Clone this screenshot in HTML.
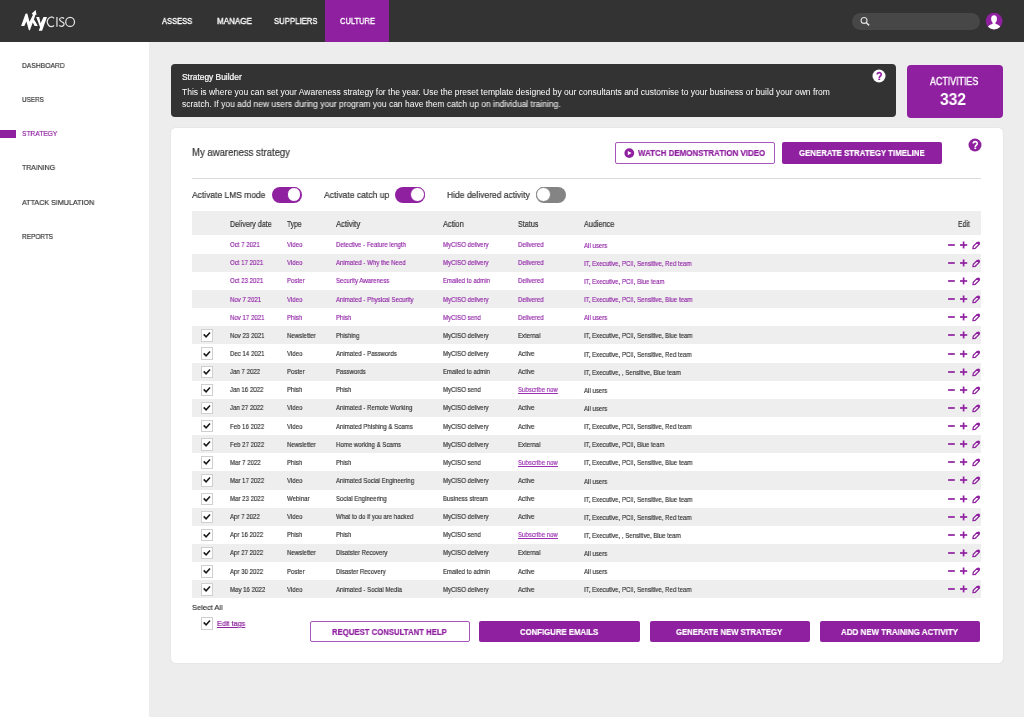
<!DOCTYPE html><html><head><meta charset="utf-8"><style>
html,body{margin:0;padding:0}
body{width:1024px;height:717px;overflow:hidden;position:relative;background:#ededed;font-family:"Liberation Sans",sans-serif}
.t{position:absolute;line-height:1;white-space:nowrap;transform-origin:0 0;will-change:transform}
.b{position:absolute}
</style></head><body>
<div class="b" style="left:0;top:0;width:1024px;height:42px;background:#333333"></div>
<div class="b" style="left:325px;top:0;width:64px;height:42px;background:#8f20a0"></div>
<svg class="b" style="left:0;top:0" width="80" height="42" viewBox="0 0 80 42">
<polygon fill="#fff" points="21.1,25.9 25.5,13.8 27.3,13.6 29.5,21.8 32.9,15 31.8,13.4 35.7,9.9 36.5,15 35.4,14.7 33.9,19.6 35.6,22 37.8,26.1 34.6,26.1 32.8,22.6 29.9,30.3 28.9,30.3 26.4,21.4 24.3,25.9"/>
<polygon fill="#fff" points="36.2,17.1 39.2,17.1 40.6,23.2 43.5,17.1 47,17.1 42.1,30.8 38.7,30.8 40.1,27.2"/>
<g fill="none" stroke="#e4e4e4" stroke-width="1.25">
<path d="M54.1,18.3 A3.95,4.85 0 1 0 54.1,25.4"/>
<line x1="56.95" y1="17.1" x2="56.95" y2="26.7"/>
<path d="M63.9,18.6 C63.2,17.4 59.6,17.2 59.6,19.6 C59.6,22 64.1,21.5 64.1,24.1 C64.1,26.9 60.1,26.9 59.3,25.3"/>
<ellipse cx="70.1" cy="21.9" rx="4.4" ry="4.5"/>
</g></svg>
<div class="t" id="nav_ASSESS" style="left:161.60px;top:16.78px;font-size:9.0px;color:#fff;font-weight:normal;letter-spacing:0px;transform:scaleX(0.8409);-webkit-text-stroke:0.35px #fff;">ASSESS</div>
<div class="t" id="nav_MANAGE" style="left:217.00px;top:16.78px;font-size:9.0px;color:#fff;font-weight:normal;letter-spacing:0px;transform:scaleX(0.8945);-webkit-text-stroke:0.35px #fff;">MANAGE</div>
<div class="t" id="nav_SUPPLIERS" style="left:274.40px;top:16.78px;font-size:9.0px;color:#fff;font-weight:normal;letter-spacing:0px;transform:scaleX(0.8609);-webkit-text-stroke:0.35px #fff;">SUPPLIERS</div>
<div class="t" id="nav_CULTURE" style="left:339.60px;top:16.78px;font-size:9.0px;color:#fff;font-weight:normal;letter-spacing:0px;transform:scaleX(0.8388);-webkit-text-stroke:0.35px #fff;">CULTURE</div>
<div class="b" style="left:851.8px;top:12.8px;width:128.2px;height:17.1px;border-radius:9px;background:#474747"></div>
<svg class="b" style="left:858px;top:14px" width="16" height="16" viewBox="858 14 16 16">
<circle cx="864.05" cy="20.4" r="2.95" fill="none" stroke="#ddd" stroke-width="1.1"/>
<line x1="866.2" y1="22.6" x2="869.2" y2="25.4" stroke="#ddd" stroke-width="1.5"/></svg>
<svg class="b" style="left:984px;top:11px" width="20" height="20" viewBox="984 11 20 20">
<defs><clipPath id="av"><circle cx="994.1" cy="21.1" r="8.4"/></clipPath></defs>
<circle cx="994.1" cy="21.1" r="8.4" fill="#8f20a0"/>
<g clip-path="url(#av)" fill="#fff"><ellipse cx="994.05" cy="18.9" rx="2.9" ry="3.7"/>
<rect x="992.6" y="21" width="2.9" height="4"/>
<path d="M987.2,31 C987.2,26.6 988.8,24.9 992.3,24.1 L995.8,24.1 C999.3,24.9 1000.9,26.6 1000.9,31 Z"/></g></svg>
<div class="b" style="left:0;top:42px;width:149px;height:675px;background:#fff"></div>
<div class="t" id="side0" style="left:21.60px;top:62.04px;font-size:8.1px;color:#333;font-weight:normal;letter-spacing:0px;transform:scaleX(0.8327);-webkit-text-stroke:0.2px #333;">DASHBOARD</div>
<div class="t" id="side1" style="left:21.60px;top:96.19px;font-size:8.1px;color:#333;font-weight:normal;letter-spacing:0px;transform:scaleX(0.7852);-webkit-text-stroke:0.2px #333;">USERS</div>
<div class="t" id="side2" style="left:21.60px;top:130.34px;font-size:8.1px;color:#8f20a0;font-weight:normal;letter-spacing:0px;transform:scaleX(0.8227);-webkit-text-stroke:0.2px #8f20a0;">STRATEGY</div>
<div class="t" id="side3" style="left:21.60px;top:164.49px;font-size:8.1px;color:#333;font-weight:normal;letter-spacing:0px;transform:scaleX(0.8533);-webkit-text-stroke:0.2px #333;">TRAINING</div>
<div class="t" id="side4" style="left:21.60px;top:198.64px;font-size:8.1px;color:#333;font-weight:normal;letter-spacing:0px;transform:scaleX(0.8822);-webkit-text-stroke:0.2px #333;">ATTACK SIMULATION</div>
<div class="t" id="side5" style="left:21.60px;top:232.79px;font-size:8.1px;color:#333;font-weight:normal;letter-spacing:0px;transform:scaleX(0.7978);-webkit-text-stroke:0.2px #333;">REPORTS</div>
<div class="b" style="left:0;top:130px;width:16px;height:7.6px;background:#8f20a0"></div>
<div class="b" style="left:171px;top:64px;width:725px;height:53px;border-radius:4px;background:#333333"></div>
<div class="t" id="sb" style="left:181.60px;top:72.89px;font-size:8.4px;color:#fff;font-weight:normal;letter-spacing:0px;transform:scaleX(1.0018);-webkit-text-stroke:0.2px #fff;">Strategy Builder</div>
<div class="t" id="d1" style="left:181.60px;top:87.60px;font-size:8.5px;color:#fff;font-weight:normal;letter-spacing:0px;transform:scaleX(1.0012);">This is where you can set your Awareness strategy for the year. Use the preset template designed by our consultants and customise to your business or build your own from</div>
<div class="t" id="d2" style="left:181.60px;top:100.00px;font-size:8.5px;color:#fff;font-weight:normal;letter-spacing:0px;transform:scaleX(0.9956);">scratch. If you add new users during your program you can have them catch up on individual training.</div>
<svg class="b" style="left:871.0px;top:67.7px" width="16" height="16" viewBox="871.0 67.7 16 16"><circle cx="879.0" cy="75.7" r="6.5" fill="#fff"/><path d="M877.25,74.2 C877.25,71.75 881.25,71.75 881.25,74.10000000000001 C881.25,75.7 879.25,75.9 879.25,77.60000000000001" fill="none" stroke="#8f20a0" stroke-width="1.6"/><rect x="878.35" y="78.2" width="1.8" height="1.5" fill="#8f20a0"/></svg>
<div class="b" style="left:907px;top:65px;width:95.6px;height:53.2px;border-radius:4px;background:#8f20a0"></div>
<div class="t" id="act" style="left:930.20px;top:77.03px;font-size:10.0px;color:#fff;font-weight:normal;letter-spacing:0px;transform:scaleX(0.8870);-webkit-text-stroke:0.35px #fff;">ACTIVITIES</div>
<div class="t" id="n332" style="left:940.40px;top:90.79px;font-size:16.3px;color:#fff;font-weight:bold;letter-spacing:0px;transform:scaleX(0.9606);">332</div>
<div class="b" style="left:171px;top:128px;width:831.8px;height:535.3px;border-radius:4.5px;background:#fff;box-shadow:0 0 1.5px rgba(0,0,0,0.12)"></div>
<div class="t" id="mas" style="left:192.30px;top:147.14px;font-size:10.7px;color:#333;font-weight:normal;letter-spacing:0px;transform:scaleX(0.8918);-webkit-text-stroke:0.2px #333;">My awareness strategy</div>
<div class="b" style="left:615.2px;top:142.4px;width:160.3px;height:21.8px;box-sizing:border-box;border:1.8px solid #a855bb;border-radius:2px;background:#fff"></div>
<svg class="b" style="left:623px;top:147px" width="13" height="13" viewBox="623 147 13 13">
<circle cx="629.3" cy="153.1" r="4.9" fill="#8f20a0"/><polygon points="627.8,150.9 631.6,153.1 627.8,155.3" fill="#fff"/></svg>
<div class="t" id="wdv" style="left:638.00px;top:148.78px;font-size:9.0px;color:#8f20a0;font-weight:bold;letter-spacing:0px;transform:scaleX(0.8816);-webkit-text-stroke:0.2px #8f20a0;">WATCH DEMONSTRATION VIDEO</div>
<div class="b" style="left:782.2px;top:142.4px;width:159.5px;height:21.3px;border-radius:2px;background:#8f20a0"></div>
<div class="t" id="gst" style="left:798.60px;top:148.88px;font-size:9.0px;color:#fff;font-weight:bold;letter-spacing:0px;transform:scaleX(0.8698);-webkit-text-stroke:0.2px #fff;">GENERATE STRATEGY TIMELINE</div>
<svg class="b" style="left:966.95px;top:137.0px" width="16" height="16" viewBox="966.95 137.0 16 16"><circle cx="974.95" cy="145.0" r="6.5" fill="#8f20a0"/><path d="M973.2,143.5 C973.2,141.05 977.2,141.05 977.2,143.4 C977.2,145.0 975.2,145.2 975.2,146.9" fill="none" stroke="#fff" stroke-width="1.6"/><rect x="974.3000000000001" y="147.5" width="1.8" height="1.5" fill="#fff"/></svg>
<div class="b" style="left:192px;top:178px;width:789px;height:1px;background:#dcdcdc"></div>
<div class="t" id="alm" style="left:192.30px;top:189.64px;font-size:9.4px;color:#333;font-weight:normal;letter-spacing:0px;transform:scaleX(0.9029);-webkit-text-stroke:0.2px #333;">Activate LMS mode</div>
<div class="b" style="left:271.9px;top:186.6px;width:29.8px;height:16.1px;border-radius:8.05px;background:#8f20a0"></div><div class="b" style="left:286.79999999999995px;top:187.3px;width:14.7px;height:14.7px;box-sizing:border-box;border-radius:50%;background:#fff;border:0.9px solid #8f20a0"></div>
<div class="t" id="acu" style="left:323.70px;top:189.64px;font-size:9.4px;color:#333;font-weight:normal;letter-spacing:0px;transform:scaleX(0.9131);-webkit-text-stroke:0.2px #333;">Activate catch up</div>
<div class="b" style="left:395.2px;top:186.6px;width:29.8px;height:16.1px;border-radius:8.05px;background:#8f20a0"></div><div class="b" style="left:410.09999999999997px;top:187.3px;width:14.7px;height:14.7px;box-sizing:border-box;border-radius:50%;background:#fff;border:0.9px solid #8f20a0"></div>
<div class="t" id="hda" style="left:446.60px;top:189.64px;font-size:9.4px;color:#333;font-weight:normal;letter-spacing:0px;transform:scaleX(0.9080);-webkit-text-stroke:0.2px #333;">Hide delivered activity</div>
<div class="b" style="left:536px;top:186.6px;width:29.8px;height:16.1px;border-radius:8.05px;background:#848484"></div><div class="b" style="left:536.1px;top:187.3px;width:14.8px;height:14.8px;box-sizing:border-box;border-radius:50%;background:#fff;border:0.9px solid #848484"></div>
<div class="b" style="left:192px;top:211.2px;width:789.3px;height:23.8px;background:#eeeeee"></div>
<div class="t" id="h_Deliverydate" style="left:229.80px;top:219.97px;font-size:8.3px;color:#333;font-weight:normal;letter-spacing:0px;transform:scaleX(0.8612);-webkit-text-stroke:0.2px #333;">Delivery date</div>
<div class="t" id="h_Type" style="left:287.30px;top:219.97px;font-size:8.3px;color:#333;font-weight:normal;letter-spacing:0px;transform:scaleX(0.8111);-webkit-text-stroke:0.2px #333;">Type</div>
<div class="t" id="h_Activity" style="left:335.90px;top:219.97px;font-size:8.3px;color:#333;font-weight:normal;letter-spacing:0px;transform:scaleX(0.9208);-webkit-text-stroke:0.2px #333;">Activity</div>
<div class="t" id="h_Action" style="left:442.80px;top:219.97px;font-size:8.3px;color:#333;font-weight:normal;letter-spacing:0px;transform:scaleX(0.8976);-webkit-text-stroke:0.2px #333;">Action</div>
<div class="t" id="h_Status" style="left:517.50px;top:219.97px;font-size:8.3px;color:#333;font-weight:normal;letter-spacing:0px;transform:scaleX(0.8669);-webkit-text-stroke:0.2px #333;">Status</div>
<div class="t" id="h_Audience" style="left:584.00px;top:219.97px;font-size:8.3px;color:#333;font-weight:normal;letter-spacing:0px;transform:scaleX(0.8755);-webkit-text-stroke:0.2px #333;">Audience</div>
<div class="t" id="h_edit" style="left:957.60px;top:219.77px;font-size:8.3px;color:#333;font-weight:normal;letter-spacing:0px;transform:scaleX(0.8184);-webkit-text-stroke:0.2px #333;">Edit</div>
<div class="t" style="left:229.80px;top:241.18px;font-size:7.3px;color:#9328a8;font-weight:normal;letter-spacing:0px;-webkit-text-stroke:0.18px #9328a8;transform:scaleX(0.8336);">Oct 7 2021</div>
<div class="t" style="left:287.30px;top:241.18px;font-size:7.3px;color:#9328a8;font-weight:normal;letter-spacing:0px;-webkit-text-stroke:0.18px #9328a8;transform:scaleX(0.8336);">Video</div>
<div class="t" style="left:335.90px;top:241.18px;font-size:7.3px;color:#9328a8;font-weight:normal;letter-spacing:0px;-webkit-text-stroke:0.18px #9328a8;transform:scaleX(0.8336);">Detective - Feature length</div>
<div class="t" style="left:442.80px;top:241.18px;font-size:7.3px;color:#9328a8;font-weight:normal;letter-spacing:0px;-webkit-text-stroke:0.18px #9328a8;transform:scaleX(0.8336);">MyCISO delivery</div>
<div class="t" style="left:517.50px;top:241.18px;font-size:7.3px;color:#9328a8;font-weight:normal;letter-spacing:0px;-webkit-text-stroke:0.18px #9328a8;transform:scaleX(0.8336);">Delivered</div>
<div class="t" style="left:584.00px;top:241.78px;font-size:7.3px;color:#9328a8;font-weight:normal;letter-spacing:0px;-webkit-text-stroke:0.18px #9328a8;transform:scaleX(0.8336);">All users</div>
<svg class="b" style="left:946px;top:235.72px" width="36" height="18" viewBox="946 235.72 36 18">
<line x1="948.1" y1="244.72" x2="954.8" y2="244.72" stroke="#8f20a0" stroke-width="1.7"/>
<line x1="960" y1="244.72" x2="967.2" y2="244.72" stroke="#8f20a0" stroke-width="1.7"/>
<line x1="963.6" y1="241.22" x2="963.6" y2="248.12" stroke="#8f20a0" stroke-width="1.7"/>
<path d="M972.9,248.41 L973.3,246.02 L977.2,242.12 L979.2,244.12 L975.3,248.02 Z" fill="none" stroke="#8f20a0" stroke-width="1.25" stroke-linejoin="round"/>
<path d="M976.6,242.72 L977.9,241.41 Q978.6,240.91 979.3,241.52 L979.9,242.12 Q980.4,242.81 979.9,243.41 L978.6,244.72 Z" fill="#8f20a0"/>
</svg>
<div class="b" style="left:192px;top:253.85px;width:789.3px;height:18.05px;background:#eeeeee"></div>
<div class="t" style="left:229.80px;top:259.32px;font-size:7.3px;color:#9328a8;font-weight:normal;letter-spacing:0px;-webkit-text-stroke:0.18px #9328a8;transform:scaleX(0.8336);">Oct 17 2021</div>
<div class="t" style="left:287.30px;top:259.32px;font-size:7.3px;color:#9328a8;font-weight:normal;letter-spacing:0px;-webkit-text-stroke:0.18px #9328a8;transform:scaleX(0.8336);">Video</div>
<div class="t" style="left:335.90px;top:259.32px;font-size:7.3px;color:#9328a8;font-weight:normal;letter-spacing:0px;-webkit-text-stroke:0.18px #9328a8;transform:scaleX(0.8336);">Animated - Why the Need</div>
<div class="t" style="left:442.80px;top:259.32px;font-size:7.3px;color:#9328a8;font-weight:normal;letter-spacing:0px;-webkit-text-stroke:0.18px #9328a8;transform:scaleX(0.8336);">MyCISO delivery</div>
<div class="t" style="left:517.50px;top:259.32px;font-size:7.3px;color:#9328a8;font-weight:normal;letter-spacing:0px;-webkit-text-stroke:0.18px #9328a8;transform:scaleX(0.8336);">Delivered</div>
<div class="t" style="left:584.00px;top:259.92px;font-size:7.3px;color:#9328a8;font-weight:normal;letter-spacing:0px;-webkit-text-stroke:0.18px #9328a8;transform:scaleX(0.8336);">IT, Executive, PCII, Sensitive, Red team</div>
<svg class="b" style="left:946px;top:253.85px" width="36" height="18" viewBox="946 253.85 36 18">
<line x1="948.1" y1="262.85" x2="954.8" y2="262.85" stroke="#8f20a0" stroke-width="1.7"/>
<line x1="960" y1="262.85" x2="967.2" y2="262.85" stroke="#8f20a0" stroke-width="1.7"/>
<line x1="963.6" y1="259.35" x2="963.6" y2="266.25" stroke="#8f20a0" stroke-width="1.7"/>
<path d="M972.9,266.55 L973.3,264.15 L977.2,260.25 L979.2,262.25 L975.3,266.15 Z" fill="none" stroke="#8f20a0" stroke-width="1.25" stroke-linejoin="round"/>
<path d="M976.6,260.85 L977.9,259.55 Q978.6,259.05 979.3,259.65 L979.9,260.25 Q980.4,260.95 979.9,261.55 L978.6,262.85 Z" fill="#8f20a0"/>
</svg>
<div class="t" style="left:229.80px;top:277.45px;font-size:7.3px;color:#9328a8;font-weight:normal;letter-spacing:0px;-webkit-text-stroke:0.18px #9328a8;transform:scaleX(0.8336);">Oct 23 2021</div>
<div class="t" style="left:287.30px;top:277.45px;font-size:7.3px;color:#9328a8;font-weight:normal;letter-spacing:0px;-webkit-text-stroke:0.18px #9328a8;transform:scaleX(0.8336);">Poster</div>
<div class="t" style="left:335.90px;top:277.45px;font-size:7.3px;color:#9328a8;font-weight:normal;letter-spacing:0px;-webkit-text-stroke:0.18px #9328a8;transform:scaleX(0.8336);">Security Awareness</div>
<div class="t" style="left:442.80px;top:277.45px;font-size:7.3px;color:#9328a8;font-weight:normal;letter-spacing:0px;-webkit-text-stroke:0.18px #9328a8;transform:scaleX(0.8336);">Emailed to admin</div>
<div class="t" style="left:517.50px;top:277.45px;font-size:7.3px;color:#9328a8;font-weight:normal;letter-spacing:0px;-webkit-text-stroke:0.18px #9328a8;transform:scaleX(0.8336);">Delivered</div>
<div class="t" style="left:584.00px;top:278.05px;font-size:7.3px;color:#9328a8;font-weight:normal;letter-spacing:0px;-webkit-text-stroke:0.18px #9328a8;transform:scaleX(0.8336);">IT, Executive, PCII, Blue team</div>
<svg class="b" style="left:946px;top:271.99px" width="36" height="18" viewBox="946 271.99 36 18">
<line x1="948.1" y1="280.99" x2="954.8" y2="280.99" stroke="#8f20a0" stroke-width="1.7"/>
<line x1="960" y1="280.99" x2="967.2" y2="280.99" stroke="#8f20a0" stroke-width="1.7"/>
<line x1="963.6" y1="277.49" x2="963.6" y2="284.38" stroke="#8f20a0" stroke-width="1.7"/>
<path d="M972.9,284.69 L973.3,282.29 L977.2,278.38 L979.2,280.38 L975.3,284.29 Z" fill="none" stroke="#8f20a0" stroke-width="1.25" stroke-linejoin="round"/>
<path d="M976.6,278.99 L977.9,277.69 Q978.6,277.19 979.3,277.79 L979.9,278.38 Q980.4,279.09 979.9,279.69 L978.6,280.99 Z" fill="#8f20a0"/>
</svg>
<div class="b" style="left:192px;top:290.12px;width:789.3px;height:18.05px;background:#eeeeee"></div>
<div class="t" style="left:229.80px;top:295.59px;font-size:7.3px;color:#9328a8;font-weight:normal;letter-spacing:0px;-webkit-text-stroke:0.18px #9328a8;transform:scaleX(0.8336);">Nov 7 2021</div>
<div class="t" style="left:287.30px;top:295.59px;font-size:7.3px;color:#9328a8;font-weight:normal;letter-spacing:0px;-webkit-text-stroke:0.18px #9328a8;transform:scaleX(0.8336);">Video</div>
<div class="t" style="left:335.90px;top:295.59px;font-size:7.3px;color:#9328a8;font-weight:normal;letter-spacing:0px;-webkit-text-stroke:0.18px #9328a8;transform:scaleX(0.8336);">Animated - Physical Security</div>
<div class="t" style="left:442.80px;top:295.59px;font-size:7.3px;color:#9328a8;font-weight:normal;letter-spacing:0px;-webkit-text-stroke:0.18px #9328a8;transform:scaleX(0.8336);">MyCISO delivery</div>
<div class="t" style="left:517.50px;top:295.59px;font-size:7.3px;color:#9328a8;font-weight:normal;letter-spacing:0px;-webkit-text-stroke:0.18px #9328a8;transform:scaleX(0.8336);">Delivered</div>
<div class="t" style="left:584.00px;top:296.19px;font-size:7.3px;color:#9328a8;font-weight:normal;letter-spacing:0px;-webkit-text-stroke:0.18px #9328a8;transform:scaleX(0.8336);">IT, Executive, PCII, Sensitive, Blue team</div>
<svg class="b" style="left:946px;top:290.12px" width="36" height="18" viewBox="946 290.12 36 18">
<line x1="948.1" y1="299.12" x2="954.8" y2="299.12" stroke="#8f20a0" stroke-width="1.7"/>
<line x1="960" y1="299.12" x2="967.2" y2="299.12" stroke="#8f20a0" stroke-width="1.7"/>
<line x1="963.6" y1="295.62" x2="963.6" y2="302.52" stroke="#8f20a0" stroke-width="1.7"/>
<path d="M972.9,302.82 L973.3,300.42 L977.2,296.52 L979.2,298.52 L975.3,302.42 Z" fill="none" stroke="#8f20a0" stroke-width="1.25" stroke-linejoin="round"/>
<path d="M976.6,297.12 L977.9,295.82 Q978.6,295.32 979.3,295.92 L979.9,296.52 Q980.4,297.22 979.9,297.82 L978.6,299.12 Z" fill="#8f20a0"/>
</svg>
<div class="t" style="left:229.80px;top:313.72px;font-size:7.3px;color:#9328a8;font-weight:normal;letter-spacing:0px;-webkit-text-stroke:0.18px #9328a8;transform:scaleX(0.8336);">Nov 17 2021</div>
<div class="t" style="left:287.30px;top:313.72px;font-size:7.3px;color:#9328a8;font-weight:normal;letter-spacing:0px;-webkit-text-stroke:0.18px #9328a8;transform:scaleX(0.8336);">Phish</div>
<div class="t" style="left:335.90px;top:313.72px;font-size:7.3px;color:#9328a8;font-weight:normal;letter-spacing:0px;-webkit-text-stroke:0.18px #9328a8;transform:scaleX(0.8336);">Phish</div>
<div class="t" style="left:442.80px;top:313.72px;font-size:7.3px;color:#9328a8;font-weight:normal;letter-spacing:0px;-webkit-text-stroke:0.18px #9328a8;transform:scaleX(0.8336);">MyCISO send</div>
<div class="t" style="left:517.50px;top:313.72px;font-size:7.3px;color:#9328a8;font-weight:normal;letter-spacing:0px;-webkit-text-stroke:0.18px #9328a8;transform:scaleX(0.8336);">Delivered</div>
<div class="t" style="left:584.00px;top:314.32px;font-size:7.3px;color:#9328a8;font-weight:normal;letter-spacing:0px;-webkit-text-stroke:0.18px #9328a8;transform:scaleX(0.8336);">All users</div>
<svg class="b" style="left:946px;top:308.25px" width="36" height="18" viewBox="946 308.25 36 18">
<line x1="948.1" y1="317.25" x2="954.8" y2="317.25" stroke="#8f20a0" stroke-width="1.7"/>
<line x1="960" y1="317.25" x2="967.2" y2="317.25" stroke="#8f20a0" stroke-width="1.7"/>
<line x1="963.6" y1="313.75" x2="963.6" y2="320.65" stroke="#8f20a0" stroke-width="1.7"/>
<path d="M972.9,320.95 L973.3,318.56 L977.2,314.65 L979.2,316.65 L975.3,320.56 Z" fill="none" stroke="#8f20a0" stroke-width="1.25" stroke-linejoin="round"/>
<path d="M976.6,315.25 L977.9,313.95 Q978.6,313.45 979.3,314.06 L979.9,314.65 Q980.4,315.36 979.9,315.95 L978.6,317.25 Z" fill="#8f20a0"/>
</svg>
<div class="b" style="left:192px;top:326.39px;width:789.3px;height:18.05px;background:#eeeeee"></div>
<div class="b" style="left:200.6px;top:329.29px;width:12.5px;height:12.5px;box-sizing:border-box;border:1px solid #cfcfcf;background:#fff"></div>
<svg class="b" style="left:200px;top:328.39px" width="14" height="14" viewBox="0 0 14 14"><polyline points="3.7,6.4 6.1,8.8 10,4.5" fill="none" stroke="#1a1a1a" stroke-width="1.55" stroke-linecap="butt"/></svg>
<div class="t" style="left:229.80px;top:331.86px;font-size:7.3px;color:#333;font-weight:normal;letter-spacing:0px;-webkit-text-stroke:0.18px #333;transform:scaleX(0.8336);">Nov 23 2021</div>
<div class="t" style="left:287.30px;top:331.86px;font-size:7.3px;color:#333;font-weight:normal;letter-spacing:0px;-webkit-text-stroke:0.18px #333;transform:scaleX(0.8336);">Newsletter</div>
<div class="t" style="left:335.90px;top:331.86px;font-size:7.3px;color:#333;font-weight:normal;letter-spacing:0px;-webkit-text-stroke:0.18px #333;transform:scaleX(0.8336);">Phishing</div>
<div class="t" style="left:442.80px;top:331.86px;font-size:7.3px;color:#333;font-weight:normal;letter-spacing:0px;-webkit-text-stroke:0.18px #333;transform:scaleX(0.8336);">MyCISO delivery</div>
<div class="t" style="left:517.50px;top:331.86px;font-size:7.3px;color:#333;font-weight:normal;letter-spacing:0px;-webkit-text-stroke:0.18px #333;transform:scaleX(0.8336);">External</div>
<div class="t" style="left:584.00px;top:332.46px;font-size:7.3px;color:#333;font-weight:normal;letter-spacing:0px;-webkit-text-stroke:0.18px #333;transform:scaleX(0.8336);">IT, Executive, PCII, Sensitive, Blue team</div>
<svg class="b" style="left:946px;top:326.39px" width="36" height="18" viewBox="946 326.39 36 18">
<line x1="948.1" y1="335.39" x2="954.8" y2="335.39" stroke="#8f20a0" stroke-width="1.7"/>
<line x1="960" y1="335.39" x2="967.2" y2="335.39" stroke="#8f20a0" stroke-width="1.7"/>
<line x1="963.6" y1="331.89" x2="963.6" y2="338.79" stroke="#8f20a0" stroke-width="1.7"/>
<path d="M972.9,339.09 L973.3,336.69 L977.2,332.79 L979.2,334.79 L975.3,338.69 Z" fill="none" stroke="#8f20a0" stroke-width="1.25" stroke-linejoin="round"/>
<path d="M976.6,333.39 L977.9,332.09 Q978.6,331.59 979.3,332.19 L979.9,332.79 Q980.4,333.49 979.9,334.09 L978.6,335.39 Z" fill="#8f20a0"/>
</svg>
<div class="b" style="left:200.6px;top:347.42px;width:12.5px;height:12.5px;box-sizing:border-box;border:1px solid #cfcfcf;background:#fff"></div>
<svg class="b" style="left:200px;top:346.52px" width="14" height="14" viewBox="0 0 14 14"><polyline points="3.7,6.4 6.1,8.8 10,4.5" fill="none" stroke="#1a1a1a" stroke-width="1.55" stroke-linecap="butt"/></svg>
<div class="t" style="left:229.80px;top:349.99px;font-size:7.3px;color:#333;font-weight:normal;letter-spacing:0px;-webkit-text-stroke:0.18px #333;transform:scaleX(0.8336);">Dec 14 2021</div>
<div class="t" style="left:287.30px;top:349.99px;font-size:7.3px;color:#333;font-weight:normal;letter-spacing:0px;-webkit-text-stroke:0.18px #333;transform:scaleX(0.8336);">Video</div>
<div class="t" style="left:335.90px;top:349.99px;font-size:7.3px;color:#333;font-weight:normal;letter-spacing:0px;-webkit-text-stroke:0.18px #333;transform:scaleX(0.8336);">Animated - Passwords</div>
<div class="t" style="left:442.80px;top:349.99px;font-size:7.3px;color:#333;font-weight:normal;letter-spacing:0px;-webkit-text-stroke:0.18px #333;transform:scaleX(0.8336);">MyCISO delivery</div>
<div class="t" style="left:517.50px;top:349.99px;font-size:7.3px;color:#333;font-weight:normal;letter-spacing:0px;-webkit-text-stroke:0.18px #333;transform:scaleX(0.8336);">Active</div>
<div class="t" style="left:584.00px;top:350.59px;font-size:7.3px;color:#333;font-weight:normal;letter-spacing:0px;-webkit-text-stroke:0.18px #333;transform:scaleX(0.8336);">IT, Executive, PCII, Sensitive, Red team</div>
<svg class="b" style="left:946px;top:344.52px" width="36" height="18" viewBox="946 344.52 36 18">
<line x1="948.1" y1="353.52" x2="954.8" y2="353.52" stroke="#8f20a0" stroke-width="1.7"/>
<line x1="960" y1="353.52" x2="967.2" y2="353.52" stroke="#8f20a0" stroke-width="1.7"/>
<line x1="963.6" y1="350.02" x2="963.6" y2="356.92" stroke="#8f20a0" stroke-width="1.7"/>
<path d="M972.9,357.22 L973.3,354.82 L977.2,350.92 L979.2,352.92 L975.3,356.82 Z" fill="none" stroke="#8f20a0" stroke-width="1.25" stroke-linejoin="round"/>
<path d="M976.6,351.52 L977.9,350.22 Q978.6,349.72 979.3,350.32 L979.9,350.92 Q980.4,351.62 979.9,352.22 L978.6,353.52 Z" fill="#8f20a0"/>
</svg>
<div class="b" style="left:192px;top:362.66px;width:789.3px;height:18.05px;background:#eeeeee"></div>
<div class="b" style="left:200.6px;top:365.56px;width:12.5px;height:12.5px;box-sizing:border-box;border:1px solid #cfcfcf;background:#fff"></div>
<svg class="b" style="left:200px;top:364.66px" width="14" height="14" viewBox="0 0 14 14"><polyline points="3.7,6.4 6.1,8.8 10,4.5" fill="none" stroke="#1a1a1a" stroke-width="1.55" stroke-linecap="butt"/></svg>
<div class="t" style="left:229.80px;top:368.13px;font-size:7.3px;color:#333;font-weight:normal;letter-spacing:0px;-webkit-text-stroke:0.18px #333;transform:scaleX(0.8336);">Jan 7 2022</div>
<div class="t" style="left:287.30px;top:368.13px;font-size:7.3px;color:#333;font-weight:normal;letter-spacing:0px;-webkit-text-stroke:0.18px #333;transform:scaleX(0.8336);">Poster</div>
<div class="t" style="left:335.90px;top:368.13px;font-size:7.3px;color:#333;font-weight:normal;letter-spacing:0px;-webkit-text-stroke:0.18px #333;transform:scaleX(0.8336);">Passwords</div>
<div class="t" style="left:442.80px;top:368.13px;font-size:7.3px;color:#333;font-weight:normal;letter-spacing:0px;-webkit-text-stroke:0.18px #333;transform:scaleX(0.8336);">Emailed to admin</div>
<div class="t" style="left:517.50px;top:368.13px;font-size:7.3px;color:#333;font-weight:normal;letter-spacing:0px;-webkit-text-stroke:0.18px #333;transform:scaleX(0.8336);">Active</div>
<div class="t" style="left:584.00px;top:368.73px;font-size:7.3px;color:#333;font-weight:normal;letter-spacing:0px;-webkit-text-stroke:0.18px #333;transform:scaleX(0.8336);">IT, Executive, , Sensitive, Blue team</div>
<svg class="b" style="left:946px;top:362.66px" width="36" height="18" viewBox="946 362.66 36 18">
<line x1="948.1" y1="371.66" x2="954.8" y2="371.66" stroke="#8f20a0" stroke-width="1.7"/>
<line x1="960" y1="371.66" x2="967.2" y2="371.66" stroke="#8f20a0" stroke-width="1.7"/>
<line x1="963.6" y1="368.16" x2="963.6" y2="375.06" stroke="#8f20a0" stroke-width="1.7"/>
<path d="M972.9,375.36 L973.3,372.96 L977.2,369.06 L979.2,371.06 L975.3,374.96 Z" fill="none" stroke="#8f20a0" stroke-width="1.25" stroke-linejoin="round"/>
<path d="M976.6,369.66 L977.9,368.36 Q978.6,367.86 979.3,368.46 L979.9,369.06 Q980.4,369.76 979.9,370.36 L978.6,371.66 Z" fill="#8f20a0"/>
</svg>
<div class="b" style="left:200.6px;top:383.69px;width:12.5px;height:12.5px;box-sizing:border-box;border:1px solid #cfcfcf;background:#fff"></div>
<svg class="b" style="left:200px;top:382.80px" width="14" height="14" viewBox="0 0 14 14"><polyline points="3.7,6.4 6.1,8.8 10,4.5" fill="none" stroke="#1a1a1a" stroke-width="1.55" stroke-linecap="butt"/></svg>
<div class="t" style="left:229.80px;top:386.26px;font-size:7.3px;color:#333;font-weight:normal;letter-spacing:0px;-webkit-text-stroke:0.18px #333;transform:scaleX(0.8336);">Jan 16 2022</div>
<div class="t" style="left:287.30px;top:386.26px;font-size:7.3px;color:#333;font-weight:normal;letter-spacing:0px;-webkit-text-stroke:0.18px #333;transform:scaleX(0.8336);">Phish</div>
<div class="t" style="left:335.90px;top:386.26px;font-size:7.3px;color:#333;font-weight:normal;letter-spacing:0px;-webkit-text-stroke:0.18px #333;transform:scaleX(0.8336);">Phish</div>
<div class="t" style="left:442.80px;top:386.26px;font-size:7.3px;color:#333;font-weight:normal;letter-spacing:0px;-webkit-text-stroke:0.18px #333;transform:scaleX(0.8336);">MyCISO send</div>
<div class="t" style="left:517.50px;top:386.26px;font-size:7.3px;color:#9a30b0;font-weight:normal;letter-spacing:0px;text-decoration:underline;text-decoration-thickness:0.6px;text-underline-offset:0.6px;-webkit-text-stroke:0.18px #9a30b0;transform:scaleX(0.8336);">Subscribe now</div>
<div class="t" style="left:584.00px;top:386.86px;font-size:7.3px;color:#333;font-weight:normal;letter-spacing:0px;-webkit-text-stroke:0.18px #333;transform:scaleX(0.8336);">All users</div>
<svg class="b" style="left:946px;top:380.80px" width="36" height="18" viewBox="946 380.80 36 18">
<line x1="948.1" y1="389.80" x2="954.8" y2="389.80" stroke="#8f20a0" stroke-width="1.7"/>
<line x1="960" y1="389.80" x2="967.2" y2="389.80" stroke="#8f20a0" stroke-width="1.7"/>
<line x1="963.6" y1="386.30" x2="963.6" y2="393.19" stroke="#8f20a0" stroke-width="1.7"/>
<path d="M972.9,393.50 L973.3,391.10 L977.2,387.19 L979.2,389.19 L975.3,393.10 Z" fill="none" stroke="#8f20a0" stroke-width="1.25" stroke-linejoin="round"/>
<path d="M976.6,387.80 L977.9,386.50 Q978.6,386.00 979.3,386.60 L979.9,387.19 Q980.4,387.90 979.9,388.50 L978.6,389.80 Z" fill="#8f20a0"/>
</svg>
<div class="b" style="left:192px;top:398.93px;width:789.3px;height:18.05px;background:#eeeeee"></div>
<div class="b" style="left:200.6px;top:401.83px;width:12.5px;height:12.5px;box-sizing:border-box;border:1px solid #cfcfcf;background:#fff"></div>
<svg class="b" style="left:200px;top:400.93px" width="14" height="14" viewBox="0 0 14 14"><polyline points="3.7,6.4 6.1,8.8 10,4.5" fill="none" stroke="#1a1a1a" stroke-width="1.55" stroke-linecap="butt"/></svg>
<div class="t" style="left:229.80px;top:404.40px;font-size:7.3px;color:#333;font-weight:normal;letter-spacing:0px;-webkit-text-stroke:0.18px #333;transform:scaleX(0.8336);">Jan 27 2022</div>
<div class="t" style="left:287.30px;top:404.40px;font-size:7.3px;color:#333;font-weight:normal;letter-spacing:0px;-webkit-text-stroke:0.18px #333;transform:scaleX(0.8336);">Video</div>
<div class="t" style="left:335.90px;top:404.40px;font-size:7.3px;color:#333;font-weight:normal;letter-spacing:0px;-webkit-text-stroke:0.18px #333;transform:scaleX(0.8336);">Animated - Remote Working</div>
<div class="t" style="left:442.80px;top:404.40px;font-size:7.3px;color:#333;font-weight:normal;letter-spacing:0px;-webkit-text-stroke:0.18px #333;transform:scaleX(0.8336);">MyCISO delivery</div>
<div class="t" style="left:517.50px;top:404.40px;font-size:7.3px;color:#333;font-weight:normal;letter-spacing:0px;-webkit-text-stroke:0.18px #333;transform:scaleX(0.8336);">Active</div>
<div class="t" style="left:584.00px;top:405.00px;font-size:7.3px;color:#333;font-weight:normal;letter-spacing:0px;-webkit-text-stroke:0.18px #333;transform:scaleX(0.8336);">All users</div>
<svg class="b" style="left:946px;top:398.93px" width="36" height="18" viewBox="946 398.93 36 18">
<line x1="948.1" y1="407.93" x2="954.8" y2="407.93" stroke="#8f20a0" stroke-width="1.7"/>
<line x1="960" y1="407.93" x2="967.2" y2="407.93" stroke="#8f20a0" stroke-width="1.7"/>
<line x1="963.6" y1="404.43" x2="963.6" y2="411.33" stroke="#8f20a0" stroke-width="1.7"/>
<path d="M972.9,411.63 L973.3,409.23 L977.2,405.33 L979.2,407.33 L975.3,411.23 Z" fill="none" stroke="#8f20a0" stroke-width="1.25" stroke-linejoin="round"/>
<path d="M976.6,405.93 L977.9,404.63 Q978.6,404.13 979.3,404.73 L979.9,405.33 Q980.4,406.03 979.9,406.63 L978.6,407.93 Z" fill="#8f20a0"/>
</svg>
<div class="b" style="left:200.6px;top:419.96px;width:12.5px;height:12.5px;box-sizing:border-box;border:1px solid #cfcfcf;background:#fff"></div>
<svg class="b" style="left:200px;top:419.06px" width="14" height="14" viewBox="0 0 14 14"><polyline points="3.7,6.4 6.1,8.8 10,4.5" fill="none" stroke="#1a1a1a" stroke-width="1.55" stroke-linecap="butt"/></svg>
<div class="t" style="left:229.80px;top:422.53px;font-size:7.3px;color:#333;font-weight:normal;letter-spacing:0px;-webkit-text-stroke:0.18px #333;transform:scaleX(0.8336);">Feb 16 2022</div>
<div class="t" style="left:287.30px;top:422.53px;font-size:7.3px;color:#333;font-weight:normal;letter-spacing:0px;-webkit-text-stroke:0.18px #333;transform:scaleX(0.8336);">Video</div>
<div class="t" style="left:335.90px;top:422.53px;font-size:7.3px;color:#333;font-weight:normal;letter-spacing:0px;-webkit-text-stroke:0.18px #333;transform:scaleX(0.8336);">Animated Phishing &amp; Scams</div>
<div class="t" style="left:442.80px;top:422.53px;font-size:7.3px;color:#333;font-weight:normal;letter-spacing:0px;-webkit-text-stroke:0.18px #333;transform:scaleX(0.8336);">MyCISO delivery</div>
<div class="t" style="left:517.50px;top:422.53px;font-size:7.3px;color:#333;font-weight:normal;letter-spacing:0px;-webkit-text-stroke:0.18px #333;transform:scaleX(0.8336);">Active</div>
<div class="t" style="left:584.00px;top:423.13px;font-size:7.3px;color:#333;font-weight:normal;letter-spacing:0px;-webkit-text-stroke:0.18px #333;transform:scaleX(0.8336);">IT, Executive, PCII, Sensitive, Red team</div>
<svg class="b" style="left:946px;top:417.06px" width="36" height="18" viewBox="946 417.06 36 18">
<line x1="948.1" y1="426.06" x2="954.8" y2="426.06" stroke="#8f20a0" stroke-width="1.7"/>
<line x1="960" y1="426.06" x2="967.2" y2="426.06" stroke="#8f20a0" stroke-width="1.7"/>
<line x1="963.6" y1="422.56" x2="963.6" y2="429.46" stroke="#8f20a0" stroke-width="1.7"/>
<path d="M972.9,429.76 L973.3,427.37 L977.2,423.46 L979.2,425.46 L975.3,429.37 Z" fill="none" stroke="#8f20a0" stroke-width="1.25" stroke-linejoin="round"/>
<path d="M976.6,424.06 L977.9,422.76 Q978.6,422.26 979.3,422.87 L979.9,423.46 Q980.4,424.17 979.9,424.76 L978.6,426.06 Z" fill="#8f20a0"/>
</svg>
<div class="b" style="left:192px;top:435.20px;width:789.3px;height:18.05px;background:#eeeeee"></div>
<div class="b" style="left:200.6px;top:438.10px;width:12.5px;height:12.5px;box-sizing:border-box;border:1px solid #cfcfcf;background:#fff"></div>
<svg class="b" style="left:200px;top:437.20px" width="14" height="14" viewBox="0 0 14 14"><polyline points="3.7,6.4 6.1,8.8 10,4.5" fill="none" stroke="#1a1a1a" stroke-width="1.55" stroke-linecap="butt"/></svg>
<div class="t" style="left:229.80px;top:440.67px;font-size:7.3px;color:#333;font-weight:normal;letter-spacing:0px;-webkit-text-stroke:0.18px #333;transform:scaleX(0.8336);">Feb 27 2022</div>
<div class="t" style="left:287.30px;top:440.67px;font-size:7.3px;color:#333;font-weight:normal;letter-spacing:0px;-webkit-text-stroke:0.18px #333;transform:scaleX(0.8336);">Newsletter</div>
<div class="t" style="left:335.90px;top:440.67px;font-size:7.3px;color:#333;font-weight:normal;letter-spacing:0px;-webkit-text-stroke:0.18px #333;transform:scaleX(0.8336);">Home working &amp; Scams</div>
<div class="t" style="left:442.80px;top:440.67px;font-size:7.3px;color:#333;font-weight:normal;letter-spacing:0px;-webkit-text-stroke:0.18px #333;transform:scaleX(0.8336);">MyCISO delivery</div>
<div class="t" style="left:517.50px;top:440.67px;font-size:7.3px;color:#333;font-weight:normal;letter-spacing:0px;-webkit-text-stroke:0.18px #333;transform:scaleX(0.8336);">External</div>
<div class="t" style="left:584.00px;top:441.27px;font-size:7.3px;color:#333;font-weight:normal;letter-spacing:0px;-webkit-text-stroke:0.18px #333;transform:scaleX(0.8336);">IT, Executive, PCII, Blue team</div>
<svg class="b" style="left:946px;top:435.20px" width="36" height="18" viewBox="946 435.20 36 18">
<line x1="948.1" y1="444.20" x2="954.8" y2="444.20" stroke="#8f20a0" stroke-width="1.7"/>
<line x1="960" y1="444.20" x2="967.2" y2="444.20" stroke="#8f20a0" stroke-width="1.7"/>
<line x1="963.6" y1="440.70" x2="963.6" y2="447.60" stroke="#8f20a0" stroke-width="1.7"/>
<path d="M972.9,447.90 L973.3,445.50 L977.2,441.60 L979.2,443.60 L975.3,447.50 Z" fill="none" stroke="#8f20a0" stroke-width="1.25" stroke-linejoin="round"/>
<path d="M976.6,442.20 L977.9,440.90 Q978.6,440.40 979.3,441.00 L979.9,441.60 Q980.4,442.30 979.9,442.90 L978.6,444.20 Z" fill="#8f20a0"/>
</svg>
<div class="b" style="left:200.6px;top:456.24px;width:12.5px;height:12.5px;box-sizing:border-box;border:1px solid #cfcfcf;background:#fff"></div>
<svg class="b" style="left:200px;top:455.34px" width="14" height="14" viewBox="0 0 14 14"><polyline points="3.7,6.4 6.1,8.8 10,4.5" fill="none" stroke="#1a1a1a" stroke-width="1.55" stroke-linecap="butt"/></svg>
<div class="t" style="left:229.80px;top:458.80px;font-size:7.3px;color:#333;font-weight:normal;letter-spacing:0px;-webkit-text-stroke:0.18px #333;transform:scaleX(0.8336);">Mar 7 2022</div>
<div class="t" style="left:287.30px;top:458.80px;font-size:7.3px;color:#333;font-weight:normal;letter-spacing:0px;-webkit-text-stroke:0.18px #333;transform:scaleX(0.8336);">Phish</div>
<div class="t" style="left:335.90px;top:458.80px;font-size:7.3px;color:#333;font-weight:normal;letter-spacing:0px;-webkit-text-stroke:0.18px #333;transform:scaleX(0.8336);">Phish</div>
<div class="t" style="left:442.80px;top:458.80px;font-size:7.3px;color:#333;font-weight:normal;letter-spacing:0px;-webkit-text-stroke:0.18px #333;transform:scaleX(0.8336);">MyCISO send</div>
<div class="t" style="left:517.50px;top:458.80px;font-size:7.3px;color:#9a30b0;font-weight:normal;letter-spacing:0px;text-decoration:underline;text-decoration-thickness:0.6px;text-underline-offset:0.6px;-webkit-text-stroke:0.18px #9a30b0;transform:scaleX(0.8336);">Subscribe now</div>
<div class="t" style="left:584.00px;top:459.40px;font-size:7.3px;color:#333;font-weight:normal;letter-spacing:0px;-webkit-text-stroke:0.18px #333;transform:scaleX(0.8336);">IT, Executive, PCII, Sensitive, Blue team</div>
<svg class="b" style="left:946px;top:453.34px" width="36" height="18" viewBox="946 453.34 36 18">
<line x1="948.1" y1="462.34" x2="954.8" y2="462.34" stroke="#8f20a0" stroke-width="1.7"/>
<line x1="960" y1="462.34" x2="967.2" y2="462.34" stroke="#8f20a0" stroke-width="1.7"/>
<line x1="963.6" y1="458.84" x2="963.6" y2="465.74" stroke="#8f20a0" stroke-width="1.7"/>
<path d="M972.9,466.04 L973.3,463.64 L977.2,459.74 L979.2,461.74 L975.3,465.64 Z" fill="none" stroke="#8f20a0" stroke-width="1.25" stroke-linejoin="round"/>
<path d="M976.6,460.34 L977.9,459.04 Q978.6,458.54 979.3,459.14 L979.9,459.74 Q980.4,460.44 979.9,461.04 L978.6,462.34 Z" fill="#8f20a0"/>
</svg>
<div class="b" style="left:192px;top:471.47px;width:789.3px;height:18.05px;background:#eeeeee"></div>
<div class="b" style="left:200.6px;top:474.37px;width:12.5px;height:12.5px;box-sizing:border-box;border:1px solid #cfcfcf;background:#fff"></div>
<svg class="b" style="left:200px;top:473.47px" width="14" height="14" viewBox="0 0 14 14"><polyline points="3.7,6.4 6.1,8.8 10,4.5" fill="none" stroke="#1a1a1a" stroke-width="1.55" stroke-linecap="butt"/></svg>
<div class="t" style="left:229.80px;top:476.94px;font-size:7.3px;color:#333;font-weight:normal;letter-spacing:0px;-webkit-text-stroke:0.18px #333;transform:scaleX(0.8336);">Mar 17 2022</div>
<div class="t" style="left:287.30px;top:476.94px;font-size:7.3px;color:#333;font-weight:normal;letter-spacing:0px;-webkit-text-stroke:0.18px #333;transform:scaleX(0.8336);">Video</div>
<div class="t" style="left:335.90px;top:476.94px;font-size:7.3px;color:#333;font-weight:normal;letter-spacing:0px;-webkit-text-stroke:0.18px #333;transform:scaleX(0.8336);">Animated Social Engineering</div>
<div class="t" style="left:442.80px;top:476.94px;font-size:7.3px;color:#333;font-weight:normal;letter-spacing:0px;-webkit-text-stroke:0.18px #333;transform:scaleX(0.8336);">MyCISO delivery</div>
<div class="t" style="left:517.50px;top:476.94px;font-size:7.3px;color:#333;font-weight:normal;letter-spacing:0px;-webkit-text-stroke:0.18px #333;transform:scaleX(0.8336);">Active</div>
<div class="t" style="left:584.00px;top:477.54px;font-size:7.3px;color:#333;font-weight:normal;letter-spacing:0px;-webkit-text-stroke:0.18px #333;transform:scaleX(0.8336);">All users</div>
<svg class="b" style="left:946px;top:471.47px" width="36" height="18" viewBox="946 471.47 36 18">
<line x1="948.1" y1="480.47" x2="954.8" y2="480.47" stroke="#8f20a0" stroke-width="1.7"/>
<line x1="960" y1="480.47" x2="967.2" y2="480.47" stroke="#8f20a0" stroke-width="1.7"/>
<line x1="963.6" y1="476.97" x2="963.6" y2="483.87" stroke="#8f20a0" stroke-width="1.7"/>
<path d="M972.9,484.17 L973.3,481.77 L977.2,477.87 L979.2,479.87 L975.3,483.77 Z" fill="none" stroke="#8f20a0" stroke-width="1.25" stroke-linejoin="round"/>
<path d="M976.6,478.47 L977.9,477.17 Q978.6,476.67 979.3,477.27 L979.9,477.87 Q980.4,478.57 979.9,479.17 L978.6,480.47 Z" fill="#8f20a0"/>
</svg>
<div class="b" style="left:200.6px;top:492.50px;width:12.5px;height:12.5px;box-sizing:border-box;border:1px solid #cfcfcf;background:#fff"></div>
<svg class="b" style="left:200px;top:491.61px" width="14" height="14" viewBox="0 0 14 14"><polyline points="3.7,6.4 6.1,8.8 10,4.5" fill="none" stroke="#1a1a1a" stroke-width="1.55" stroke-linecap="butt"/></svg>
<div class="t" style="left:229.80px;top:495.07px;font-size:7.3px;color:#333;font-weight:normal;letter-spacing:0px;-webkit-text-stroke:0.18px #333;transform:scaleX(0.8336);">Mar 23 2022</div>
<div class="t" style="left:287.30px;top:495.07px;font-size:7.3px;color:#333;font-weight:normal;letter-spacing:0px;-webkit-text-stroke:0.18px #333;transform:scaleX(0.8336);">Webinar</div>
<div class="t" style="left:335.90px;top:495.07px;font-size:7.3px;color:#333;font-weight:normal;letter-spacing:0px;-webkit-text-stroke:0.18px #333;transform:scaleX(0.8336);">Social Engineering</div>
<div class="t" style="left:442.80px;top:495.07px;font-size:7.3px;color:#333;font-weight:normal;letter-spacing:0px;-webkit-text-stroke:0.18px #333;transform:scaleX(0.8336);">Business stream</div>
<div class="t" style="left:517.50px;top:495.07px;font-size:7.3px;color:#333;font-weight:normal;letter-spacing:0px;-webkit-text-stroke:0.18px #333;transform:scaleX(0.8336);">Active</div>
<div class="t" style="left:584.00px;top:495.67px;font-size:7.3px;color:#333;font-weight:normal;letter-spacing:0px;-webkit-text-stroke:0.18px #333;transform:scaleX(0.8336);">IT, Executive, PCII, Sensitive, Blue team</div>
<svg class="b" style="left:946px;top:489.61px" width="36" height="18" viewBox="946 489.61 36 18">
<line x1="948.1" y1="498.61" x2="954.8" y2="498.61" stroke="#8f20a0" stroke-width="1.7"/>
<line x1="960" y1="498.61" x2="967.2" y2="498.61" stroke="#8f20a0" stroke-width="1.7"/>
<line x1="963.6" y1="495.11" x2="963.6" y2="502.00" stroke="#8f20a0" stroke-width="1.7"/>
<path d="M972.9,502.31 L973.3,499.91 L977.2,496.00 L979.2,498.00 L975.3,501.91 Z" fill="none" stroke="#8f20a0" stroke-width="1.25" stroke-linejoin="round"/>
<path d="M976.6,496.61 L977.9,495.31 Q978.6,494.81 979.3,495.41 L979.9,496.00 Q980.4,496.71 979.9,497.31 L978.6,498.61 Z" fill="#8f20a0"/>
</svg>
<div class="b" style="left:192px;top:507.74px;width:789.3px;height:18.05px;background:#eeeeee"></div>
<div class="b" style="left:200.6px;top:510.64px;width:12.5px;height:12.5px;box-sizing:border-box;border:1px solid #cfcfcf;background:#fff"></div>
<svg class="b" style="left:200px;top:509.74px" width="14" height="14" viewBox="0 0 14 14"><polyline points="3.7,6.4 6.1,8.8 10,4.5" fill="none" stroke="#1a1a1a" stroke-width="1.55" stroke-linecap="butt"/></svg>
<div class="t" style="left:229.80px;top:513.21px;font-size:7.3px;color:#333;font-weight:normal;letter-spacing:0px;-webkit-text-stroke:0.18px #333;transform:scaleX(0.8336);">Apr 7 2022</div>
<div class="t" style="left:287.30px;top:513.21px;font-size:7.3px;color:#333;font-weight:normal;letter-spacing:0px;-webkit-text-stroke:0.18px #333;transform:scaleX(0.8336);">Video</div>
<div class="t" style="left:335.90px;top:513.21px;font-size:7.3px;color:#333;font-weight:normal;letter-spacing:0px;-webkit-text-stroke:0.18px #333;transform:scaleX(0.8336);">What to do if you are hacked</div>
<div class="t" style="left:442.80px;top:513.21px;font-size:7.3px;color:#333;font-weight:normal;letter-spacing:0px;-webkit-text-stroke:0.18px #333;transform:scaleX(0.8336);">MyCISO delivery</div>
<div class="t" style="left:517.50px;top:513.21px;font-size:7.3px;color:#333;font-weight:normal;letter-spacing:0px;-webkit-text-stroke:0.18px #333;transform:scaleX(0.8336);">Active</div>
<div class="t" style="left:584.00px;top:513.81px;font-size:7.3px;color:#333;font-weight:normal;letter-spacing:0px;-webkit-text-stroke:0.18px #333;transform:scaleX(0.8336);">IT, Executive, PCII, Sensitive, Red team</div>
<svg class="b" style="left:946px;top:507.74px" width="36" height="18" viewBox="946 507.74 36 18">
<line x1="948.1" y1="516.74" x2="954.8" y2="516.74" stroke="#8f20a0" stroke-width="1.7"/>
<line x1="960" y1="516.74" x2="967.2" y2="516.74" stroke="#8f20a0" stroke-width="1.7"/>
<line x1="963.6" y1="513.24" x2="963.6" y2="520.14" stroke="#8f20a0" stroke-width="1.7"/>
<path d="M972.9,520.44 L973.3,518.04 L977.2,514.14 L979.2,516.14 L975.3,520.04 Z" fill="none" stroke="#8f20a0" stroke-width="1.25" stroke-linejoin="round"/>
<path d="M976.6,514.74 L977.9,513.44 Q978.6,512.94 979.3,513.54 L979.9,514.14 Q980.4,514.84 979.9,515.44 L978.6,516.74 Z" fill="#8f20a0"/>
</svg>
<div class="b" style="left:200.6px;top:528.77px;width:12.5px;height:12.5px;box-sizing:border-box;border:1px solid #cfcfcf;background:#fff"></div>
<svg class="b" style="left:200px;top:527.88px" width="14" height="14" viewBox="0 0 14 14"><polyline points="3.7,6.4 6.1,8.8 10,4.5" fill="none" stroke="#1a1a1a" stroke-width="1.55" stroke-linecap="butt"/></svg>
<div class="t" style="left:229.80px;top:531.34px;font-size:7.3px;color:#333;font-weight:normal;letter-spacing:0px;-webkit-text-stroke:0.18px #333;transform:scaleX(0.8336);">Apr 16 2022</div>
<div class="t" style="left:287.30px;top:531.34px;font-size:7.3px;color:#333;font-weight:normal;letter-spacing:0px;-webkit-text-stroke:0.18px #333;transform:scaleX(0.8336);">Phish</div>
<div class="t" style="left:335.90px;top:531.34px;font-size:7.3px;color:#333;font-weight:normal;letter-spacing:0px;-webkit-text-stroke:0.18px #333;transform:scaleX(0.8336);">Phish</div>
<div class="t" style="left:442.80px;top:531.34px;font-size:7.3px;color:#333;font-weight:normal;letter-spacing:0px;-webkit-text-stroke:0.18px #333;transform:scaleX(0.8336);">MyCISO send</div>
<div class="t" style="left:517.50px;top:531.34px;font-size:7.3px;color:#9a30b0;font-weight:normal;letter-spacing:0px;text-decoration:underline;text-decoration-thickness:0.6px;text-underline-offset:0.6px;-webkit-text-stroke:0.18px #9a30b0;transform:scaleX(0.8336);">Subscribe now</div>
<div class="t" style="left:584.00px;top:531.94px;font-size:7.3px;color:#333;font-weight:normal;letter-spacing:0px;-webkit-text-stroke:0.18px #333;transform:scaleX(0.8336);">IT, Executive, , Sensitive, Blue team</div>
<svg class="b" style="left:946px;top:525.88px" width="36" height="18" viewBox="946 525.88 36 18">
<line x1="948.1" y1="534.88" x2="954.8" y2="534.88" stroke="#8f20a0" stroke-width="1.7"/>
<line x1="960" y1="534.88" x2="967.2" y2="534.88" stroke="#8f20a0" stroke-width="1.7"/>
<line x1="963.6" y1="531.38" x2="963.6" y2="538.27" stroke="#8f20a0" stroke-width="1.7"/>
<path d="M972.9,538.58 L973.3,536.17 L977.2,532.27 L979.2,534.27 L975.3,538.17 Z" fill="none" stroke="#8f20a0" stroke-width="1.25" stroke-linejoin="round"/>
<path d="M976.6,532.88 L977.9,531.58 Q978.6,531.08 979.3,531.67 L979.9,532.27 Q980.4,532.98 979.9,533.58 L978.6,534.88 Z" fill="#8f20a0"/>
</svg>
<div class="b" style="left:192px;top:544.01px;width:789.3px;height:18.05px;background:#eeeeee"></div>
<div class="b" style="left:200.6px;top:546.91px;width:12.5px;height:12.5px;box-sizing:border-box;border:1px solid #cfcfcf;background:#fff"></div>
<svg class="b" style="left:200px;top:546.01px" width="14" height="14" viewBox="0 0 14 14"><polyline points="3.7,6.4 6.1,8.8 10,4.5" fill="none" stroke="#1a1a1a" stroke-width="1.55" stroke-linecap="butt"/></svg>
<div class="t" style="left:229.80px;top:549.48px;font-size:7.3px;color:#333;font-weight:normal;letter-spacing:0px;-webkit-text-stroke:0.18px #333;transform:scaleX(0.8336);">Apr 27 2022</div>
<div class="t" style="left:287.30px;top:549.48px;font-size:7.3px;color:#333;font-weight:normal;letter-spacing:0px;-webkit-text-stroke:0.18px #333;transform:scaleX(0.8336);">Newsletter</div>
<div class="t" style="left:335.90px;top:549.48px;font-size:7.3px;color:#333;font-weight:normal;letter-spacing:0px;-webkit-text-stroke:0.18px #333;transform:scaleX(0.8336);">Disatster Recovery</div>
<div class="t" style="left:442.80px;top:549.48px;font-size:7.3px;color:#333;font-weight:normal;letter-spacing:0px;-webkit-text-stroke:0.18px #333;transform:scaleX(0.8336);">MyCISO delivery</div>
<div class="t" style="left:517.50px;top:549.48px;font-size:7.3px;color:#333;font-weight:normal;letter-spacing:0px;-webkit-text-stroke:0.18px #333;transform:scaleX(0.8336);">External</div>
<div class="t" style="left:584.00px;top:550.08px;font-size:7.3px;color:#333;font-weight:normal;letter-spacing:0px;-webkit-text-stroke:0.18px #333;transform:scaleX(0.8336);">All users</div>
<svg class="b" style="left:946px;top:544.01px" width="36" height="18" viewBox="946 544.01 36 18">
<line x1="948.1" y1="553.01" x2="954.8" y2="553.01" stroke="#8f20a0" stroke-width="1.7"/>
<line x1="960" y1="553.01" x2="967.2" y2="553.01" stroke="#8f20a0" stroke-width="1.7"/>
<line x1="963.6" y1="549.51" x2="963.6" y2="556.41" stroke="#8f20a0" stroke-width="1.7"/>
<path d="M972.9,556.71 L973.3,554.31 L977.2,550.41 L979.2,552.41 L975.3,556.31 Z" fill="none" stroke="#8f20a0" stroke-width="1.25" stroke-linejoin="round"/>
<path d="M976.6,551.01 L977.9,549.71 Q978.6,549.21 979.3,549.81 L979.9,550.41 Q980.4,551.11 979.9,551.71 L978.6,553.01 Z" fill="#8f20a0"/>
</svg>
<div class="b" style="left:200.6px;top:565.04px;width:12.5px;height:12.5px;box-sizing:border-box;border:1px solid #cfcfcf;background:#fff"></div>
<svg class="b" style="left:200px;top:564.14px" width="14" height="14" viewBox="0 0 14 14"><polyline points="3.7,6.4 6.1,8.8 10,4.5" fill="none" stroke="#1a1a1a" stroke-width="1.55" stroke-linecap="butt"/></svg>
<div class="t" style="left:229.80px;top:567.61px;font-size:7.3px;color:#333;font-weight:normal;letter-spacing:0px;-webkit-text-stroke:0.18px #333;transform:scaleX(0.8336);">Apr 30 2022</div>
<div class="t" style="left:287.30px;top:567.61px;font-size:7.3px;color:#333;font-weight:normal;letter-spacing:0px;-webkit-text-stroke:0.18px #333;transform:scaleX(0.8336);">Poster</div>
<div class="t" style="left:335.90px;top:567.61px;font-size:7.3px;color:#333;font-weight:normal;letter-spacing:0px;-webkit-text-stroke:0.18px #333;transform:scaleX(0.8336);">Disaster Recovery</div>
<div class="t" style="left:442.80px;top:567.61px;font-size:7.3px;color:#333;font-weight:normal;letter-spacing:0px;-webkit-text-stroke:0.18px #333;transform:scaleX(0.8336);">Emailed to admin</div>
<div class="t" style="left:517.50px;top:567.61px;font-size:7.3px;color:#333;font-weight:normal;letter-spacing:0px;-webkit-text-stroke:0.18px #333;transform:scaleX(0.8336);">Active</div>
<div class="t" style="left:584.00px;top:568.21px;font-size:7.3px;color:#333;font-weight:normal;letter-spacing:0px;-webkit-text-stroke:0.18px #333;transform:scaleX(0.8336);">All users</div>
<svg class="b" style="left:946px;top:562.14px" width="36" height="18" viewBox="946 562.14 36 18">
<line x1="948.1" y1="571.14" x2="954.8" y2="571.14" stroke="#8f20a0" stroke-width="1.7"/>
<line x1="960" y1="571.14" x2="967.2" y2="571.14" stroke="#8f20a0" stroke-width="1.7"/>
<line x1="963.6" y1="567.64" x2="963.6" y2="574.54" stroke="#8f20a0" stroke-width="1.7"/>
<path d="M972.9,574.85 L973.3,572.44 L977.2,568.54 L979.2,570.54 L975.3,574.44 Z" fill="none" stroke="#8f20a0" stroke-width="1.25" stroke-linejoin="round"/>
<path d="M976.6,569.14 L977.9,567.85 Q978.6,567.35 979.3,567.94 L979.9,568.54 Q980.4,569.25 979.9,569.85 L978.6,571.14 Z" fill="#8f20a0"/>
</svg>
<div class="b" style="left:192px;top:580.28px;width:789.3px;height:18.05px;background:#eeeeee"></div>
<div class="b" style="left:200.6px;top:583.18px;width:12.5px;height:12.5px;box-sizing:border-box;border:1px solid #cfcfcf;background:#fff"></div>
<svg class="b" style="left:200px;top:582.28px" width="14" height="14" viewBox="0 0 14 14"><polyline points="3.7,6.4 6.1,8.8 10,4.5" fill="none" stroke="#1a1a1a" stroke-width="1.55" stroke-linecap="butt"/></svg>
<div class="t" style="left:229.80px;top:585.75px;font-size:7.3px;color:#333;font-weight:normal;letter-spacing:0px;-webkit-text-stroke:0.18px #333;transform:scaleX(0.8336);">May 16 2022</div>
<div class="t" style="left:287.30px;top:585.75px;font-size:7.3px;color:#333;font-weight:normal;letter-spacing:0px;-webkit-text-stroke:0.18px #333;transform:scaleX(0.8336);">Video</div>
<div class="t" style="left:335.90px;top:585.75px;font-size:7.3px;color:#333;font-weight:normal;letter-spacing:0px;-webkit-text-stroke:0.18px #333;transform:scaleX(0.8336);">Animated - Social Media</div>
<div class="t" style="left:442.80px;top:585.75px;font-size:7.3px;color:#333;font-weight:normal;letter-spacing:0px;-webkit-text-stroke:0.18px #333;transform:scaleX(0.8336);">MyCISO delivery</div>
<div class="t" style="left:517.50px;top:585.75px;font-size:7.3px;color:#333;font-weight:normal;letter-spacing:0px;-webkit-text-stroke:0.18px #333;transform:scaleX(0.8336);">Active</div>
<div class="t" style="left:584.00px;top:586.35px;font-size:7.3px;color:#333;font-weight:normal;letter-spacing:0px;-webkit-text-stroke:0.18px #333;transform:scaleX(0.8336);">IT, Executive, PCII, Sensitive, Red team</div>
<svg class="b" style="left:946px;top:580.28px" width="36" height="18" viewBox="946 580.28 36 18">
<line x1="948.1" y1="589.28" x2="954.8" y2="589.28" stroke="#8f20a0" stroke-width="1.7"/>
<line x1="960" y1="589.28" x2="967.2" y2="589.28" stroke="#8f20a0" stroke-width="1.7"/>
<line x1="963.6" y1="585.78" x2="963.6" y2="592.68" stroke="#8f20a0" stroke-width="1.7"/>
<path d="M972.9,592.98 L973.3,590.58 L977.2,586.68 L979.2,588.68 L975.3,592.58 Z" fill="none" stroke="#8f20a0" stroke-width="1.25" stroke-linejoin="round"/>
<path d="M976.6,587.28 L977.9,585.98 Q978.6,585.48 979.3,586.08 L979.9,586.68 Q980.4,587.38 979.9,587.98 L978.6,589.28 Z" fill="#8f20a0"/>
</svg>
<div class="t" id="sa" style="left:191.60px;top:603.64px;font-size:8.1px;color:#333;font-weight:normal;letter-spacing:0px;transform:scaleX(0.9220);-webkit-text-stroke:0.2px #333;">Select All</div>
<div class="b" style="left:200.6px;top:617px;width:12.5px;height:12.5px;box-sizing:border-box;border:1px solid #cfcfcf;background:#fff"></div>
<svg class="b" style="left:200px;top:616.2px" width="14" height="14" viewBox="0 0 14 14"><polyline points="3.7,6.4 6.1,8.8 10,4.5" fill="none" stroke="#1a1a1a" stroke-width="1.55" stroke-linecap="butt"/></svg>
<div class="t" id="et" style="left:217.00px;top:619.68px;font-size:7.7px;color:#8f20a0;font-weight:normal;letter-spacing:0px;transform:scaleX(0.9425);text-decoration:underline;text-decoration-thickness:0.7px;text-underline-offset:1px;-webkit-text-stroke:0.2px #8f20a0;">Edit tags</div>
<div class="b" style="left:309.8px;top:621.25px;width:160px;height:21px;box-sizing:border-box;border:1.8px solid #a855bb;border-radius:2px;background:#fff"></div>
<div class="t" id="rch" style="left:331.60px;top:628.38px;font-size:9.0px;color:#8f20a0;font-weight:bold;letter-spacing:0px;transform:scaleX(0.8613);-webkit-text-stroke:0.2px #8f20a0;">REQUEST CONSULTANT HELP</div>
<div class="b" style="left:479.3px;top:621.2px;width:160.4px;height:21px;border-radius:2px;background:#8f20a0"></div>
<div class="t" id="bb_CONF" style="left:520.00px;top:628.38px;font-size:9.0px;color:#fff;font-weight:bold;letter-spacing:0px;transform:scaleX(0.8639);-webkit-text-stroke:0.2px #fff;">CONFIGURE EMAILS</div>
<div class="b" style="left:649.75px;top:621.2px;width:159.75px;height:21px;border-radius:2px;background:#8f20a0"></div>
<div class="t" id="bb_GENE" style="left:676.40px;top:628.38px;font-size:9.0px;color:#fff;font-weight:bold;letter-spacing:0px;transform:scaleX(0.8579);-webkit-text-stroke:0.2px #fff;">GENERATE NEW STRATEGY</div>
<div class="b" style="left:820.4px;top:621.2px;width:159.6px;height:21px;border-radius:2px;background:#8f20a0"></div>
<div class="t" id="bb_ADD " style="left:841.30px;top:628.38px;font-size:9.0px;color:#fff;font-weight:bold;letter-spacing:0px;transform:scaleX(0.8852);-webkit-text-stroke:0.2px #fff;">ADD NEW TRAINING ACTIVITY</div>
</body></html>
